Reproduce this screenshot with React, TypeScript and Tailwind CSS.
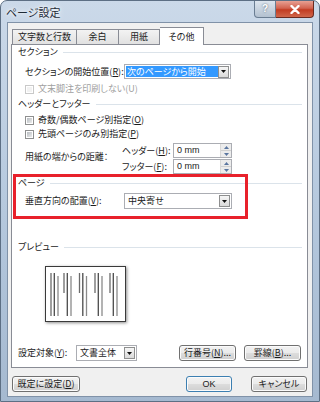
import type { ReactNode } from "react";

function U({ children }: { children: ReactNode }) {
  return <span className="underline underline-offset-[1px]">{children}</span>;
}

function DropArrow({ className }: { className: string }) {
  return (
    <div
      className={`flex items-center justify-center border border-[#8e8f8f] bg-gradient-to-b from-[#f6f6f6] to-[#dadada] ${className}`}
    >
      <svg width="5" height="3" viewBox="0 0 5 3">
        <path d="M0 0h5L2.5 3z" fill="#111" />
      </svg>
    </div>
  );
}

function Combo({ className, children }: { className: string; children: ReactNode }) {
  return (
    <div className={`flex items-center border border-[#abadb3] bg-white ${className}`}>
      <div className="flex h-full min-w-0 flex-1 items-center pl-px">{children}</div>
      <DropArrow className="mr-px h-[12px] w-[11px]" />
    </div>
  );
}

function Check({ disabled }: { disabled?: boolean }) {
  if (disabled) {
    return (
      <div className="h-[9px] w-[9px] border border-[#c9c9c9] bg-white p-px">
        <div className="h-full w-full bg-[#f2f2f2]" />
      </div>
    );
  }
  return (
    <div className="h-[9px] w-[9px] border border-[#8e8f8f] bg-white p-px">
      <div className="h-full w-full bg-gradient-to-br from-[#b7bcc1] to-[#ececec]" />
    </div>
  );
}

function Spin() {
  return (
    <div className="flex h-[15px] w-[59px] border border-[#abadb3] bg-white">
      <div className="flex-1 pl-[3px] text-[9px] leading-[13px] [font-family:'Liberation_Sans',sans-serif]">0 mm</div>
      <div className="flex w-[11px] flex-col border-l border-[#d8d8d8] bg-[#ececec]">
        <div className="flex flex-1 items-center justify-center border-b border-[#d0d0d0]">
          <svg width="5" height="3" viewBox="0 0 5 3">
            <path d="M0 3h5L2.5 0z" fill="#5a76a0" />
          </svg>
        </div>
        <div className="flex flex-1 items-center justify-center">
          <svg width="5" height="3" viewBox="0 0 5 3">
            <path d="M0 0h5L2.5 3z" fill="#5a76a0" />
          </svg>
        </div>
      </div>
    </div>
  );
}

function Btn({ className, children, primary }: { className: string; children: ReactNode; primary?: boolean }) {
  return (
    <div
      className={`flex items-center justify-center rounded-[3px] border bg-[linear-gradient(#f2f2f2_0%,#ebebeb_50%,#dddddd_50%,#cfcfcf_100%)] shadow-[inset_0_0_0_1px_#fbfbfb] ${
        primary ? "border-[#3c7fb1]" : "border-[#707070]"
      } ${className}`}
    >
      {children}
    </div>
  );
}

function Group({ title }: { title: string }) {
  return (
    <div className="flex h-[14px] items-center pl-[6px] pr-[5px]">
      <span>{title}</span>
      <div className="ml-[5px] h-px flex-1 bg-[#dbe3ea]" />
    </div>
  );
}

function Preview() {
  const groups = [5, 18, 33.5, 49, 64];
  return (
    <div className="ml-[33px] mt-[12px] h-[56px] w-[81px] border border-[#3a3a3a] bg-white shadow-[1px_1px_3px_rgba(0,0,0,0.45)]">
      <svg width="79" height="54" viewBox="0 0 79 54">
        {groups.map((x, i) => (
          <g key={i} stroke="#6b6b6b" strokeWidth="1.3">
            <line x1={x} y1={6} x2={x} y2={i === 0 ? 49 : 26} />
            <line x1={x + 3.3} y1={6} x2={x + 3.3} y2={49} stroke="#4a4a4a" />
            <line x1={x + 7} y1={9} x2={x + 7} y2={49} stroke="#8a8a8a" />
          </g>
        ))}
      </svg>
    </div>
  );
}

export default function App() {
  return (
    <div className="flex h-[402px] w-[320px] flex-col whitespace-nowrap rounded-t-[7px] border border-[#5d6f84] bg-gradient-to-b from-[#cbd9e9] via-[#b6c9de] to-[#a5b9d0] text-[9px] leading-[14px] text-[#1b1b1b] [font-family:'Noto_Sans_CJK_JP','Noto_Sans',sans-serif] [font-feature-settings:'palt']">
      {/* title bar */}
      <div className="flex h-[21px] items-start">
        <span className="pl-[5px] pt-[4px] text-[11px] leading-[14px] text-[#1e2a36] [text-shadow:0_0_6px_#ffffff,0_0_3px_#ffffff]">
          ページ設定
        </span>
        <div className="ml-auto mr-[5px] flex">
          <div className="flex h-[17px] w-[22px] items-center justify-center rounded-bl-[4px] border border-t-0 border-[#6a7d92] bg-gradient-to-b from-[#dde5ee] to-[#b3c1d0] text-[10px] font-bold text-white [font-family:'Liberation_Sans',sans-serif] [text-shadow:0_0_2px_#4a5a6a]">
            ?
          </div>
          <div className="flex h-[17px] w-[38px] items-center justify-center rounded-br-[4px] border border-l-0 border-t-0 border-[#6a2a20] bg-[linear-gradient(#e8a093_0%,#d26350_45%,#c23c22_55%,#d0664a_100%)]">
            <svg width="10" height="9" viewBox="0 0 10 9">
              <path d="M1.5 1l7 7M8.5 1l-7 7" stroke="#ffffff" strokeWidth="2.4" strokeLinecap="round" />
            </svg>
          </div>
        </div>
      </div>

      {/* client */}
      <div className="mx-[6px] mb-[4px] flex flex-1 flex-col border border-[#8092a8] bg-[#f0f0f0] pt-[4px]">
        {/* tabs */}
        <div className="ml-[4px] flex h-[17px] items-end">
          <div className="flex h-[15px] w-[65px] items-center justify-center border border-b-0 border-[#898c95] bg-gradient-to-b from-[#f3f3f3] to-[#e1e1e1]">
            文字数と行数
          </div>
          <div className="flex h-[15px] w-[42px] items-center justify-center border border-b-0 border-l-0 border-[#898c95] bg-gradient-to-b from-[#f3f3f3] to-[#e1e1e1]">
            余白
          </div>
          <div className="flex h-[15px] w-[41px] items-center justify-center border border-b-0 border-l-0 border-[#898c95] bg-gradient-to-b from-[#f3f3f3] to-[#e1e1e1]">
            用紙
          </div>
          <div className="relative z-10 -mb-px flex h-[18px] w-[44px] items-center justify-center border border-b-0 border-l-0 border-[#898c95] bg-white">
            その他
          </div>
        </div>

        {/* panel */}
        <div className="relative ml-[3px] flex h-[324px] w-[297px] flex-col border border-[#898c95] bg-white">
          <Group title="セクション" />
          <div className="mt-[5px] flex h-[15px] items-center">
            <div className="w-[112px] pl-[13px]">
              セクションの開始位置(<U>R</U>):
            </div>
            <Combo className="h-[15px] w-[107px]">
              <span className="flex h-[11px] w-full items-center bg-[#3399ff] pl-px text-white">次のページから開始</span>
            </Combo>
          </div>
          <div className="mt-[3px] flex h-[14px] items-center gap-[4px] pl-[13px] text-[#a0a0a0]">
            <Check disabled />
            <span>文末脚注を印刷しない(U)</span>
          </div>
          <div className="mt-px">
            <Group title="ヘッダーとフッター" />
          </div>
          <div className="mt-[2px] flex h-[14px] items-center gap-[4px] pl-[13px]">
            <Check />
            <span>
              奇数/偶数ページ別指定(<U>O</U>)
            </span>
          </div>
          <div className="flex h-[14px] items-center gap-[4px] pl-[13px]">
            <Check />
            <span>
              先頭ページのみ別指定(<U>P</U>)
            </span>
          </div>
          <div className="mt-[2px] flex pl-[13px]">
            <div className="flex w-[97px] items-center pb-[3px]">用紙の端からの距離：</div>
            <div className="flex flex-col gap-px">
              <div className="flex h-[15px] items-center">
                <span className="w-[51px]">
                  ヘッダー(<U>H</U>):
                </span>
                <Spin />
              </div>
              <div className="flex h-[15px] items-center">
                <span className="w-[51px]">
                  フッター(<U>F</U>):
                </span>
                <Spin />
              </div>
            </div>
          </div>
          <div className="mt-[2px]">
            <Group title="ページ" />
          </div>
          <div className="mt-[3px] flex h-[16px] items-center">
            <div className="w-[112px] pl-[13px]">
              垂直方向の配置(<U>V</U>):
            </div>
            <Combo className="h-[16px] w-[108px]">
              <span className="pl-[2px]">中央寄せ</span>
            </Combo>
          </div>
          <div className="mt-[31px]">
            <Group title="プレビュー" />
          </div>
          <Preview />
          <div className="mt-[23px] flex h-[16px] items-center pr-[6px]">
            <div className="w-[64px] pl-[6px]">
              設定対象(<U>Y</U>):
            </div>
            <Combo className="h-[16px] w-[61px]">
              <span className="pl-[2px]">文書全体</span>
            </Combo>
            <Btn className="ml-auto h-[16px] w-[57px]">
              行番号(<U>N</U>)...
            </Btn>
            <Btn className="ml-[8px] h-[16px] w-[57px]">
              罫線(<U>B</U>)...
            </Btn>
          </div>

          {/* annotation frame */}
          <div className="pointer-events-none absolute left-[1px] top-[129px] h-[45px] w-[235px] border-[3px] border-[#e8212b]" />
        </div>

        {/* footer */}
        <div className="mt-[8px] flex h-[16px] items-center pl-[4px] pr-[5px]">
          <Btn className="h-[16px] w-[68px]">
            既定に設定(<U>D</U>)
          </Btn>
          <Btn primary className="ml-auto h-[16px] w-[46px] [font-family:'Liberation_Sans',sans-serif]">
            OK
          </Btn>
          <Btn className="ml-[19px] h-[16px] w-[56px]">キャンセル</Btn>
        </div>
      </div>
    </div>
  );
}
